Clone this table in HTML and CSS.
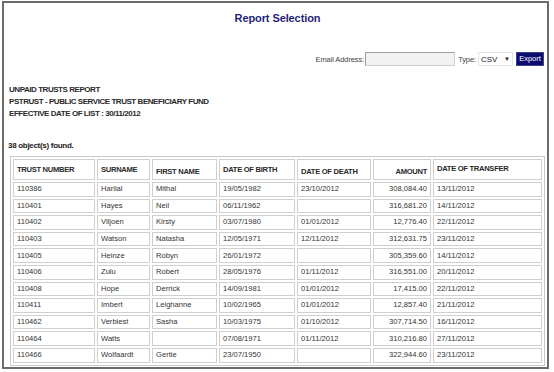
FILE: index.html
```html
<!DOCTYPE html>
<html>
<head>
<meta charset="utf-8">
<link rel="stylesheet" href="styles.css">
</head>
<body>
<div class="frame">
  <h1 class="title">Report Selection</h1>
  <div class="export-row">
    <span class="lbl">Email Address:</span>
    <span class="email"></span>
    <span class="lbl type-lbl">Type:</span>
    <span class="select">CSV <span class="arrow">▼</span></span>
    <span class="btn">Export</span>
  </div>
  <div class="report-head">
    <div>UNPAID TRUSTS REPORT</div>
    <div>PSTRUST - PUBLIC SERVICE TRUST BENEFICIARY FUND</div>
    <div>EFFECTIVE DATE OF LIST : 30/11/2012</div>
  </div>
  <div class="found">38 object(s) found.</div>
  <table class="grid">
    <colgroup>
      <col style="width:82px"><col style="width:53px"><col style="width:65px"><col style="width:76px"><col style="width:74px"><col style="width:58px"><col style="width:109px">
    </colgroup>
    <thead>
      <tr>
        <th>TRUST NUMBER</th>
        <th>SURNAME</th>
        <th class="low">FIRST NAME</th>
        <th>DATE OF BIRTH</th>
        <th class="low">DATE OF DEATH</th>
        <th class="num low">AMOUNT</th>
        <th class="high">DATE OF TRANSFER</th>
      </tr>
    </thead>
    <tbody>
      <tr><td>110386</td><td>Harilal</td><td>Mithal</td><td>19/05/1982</td><td>23/10/2012</td><td class="num">308,084.40</td><td>13/11/2012</td></tr>
      <tr><td>110401</td><td>Hayes</td><td>Neil</td><td>06/11/1962</td><td></td><td class="num">316,681.20</td><td>14/11/2012</td></tr>
      <tr><td>110402</td><td>Viljoen</td><td>Kirsty</td><td>03/07/1980</td><td>01/01/2012</td><td class="num">12,776.40</td><td>22/11/2012</td></tr>
      <tr><td>110403</td><td>Watson</td><td>Natasha</td><td>12/05/1971</td><td>12/11/2012</td><td class="num">312,631.75</td><td>23/11/2012</td></tr>
      <tr><td>110405</td><td>Heinze</td><td>Robyn</td><td>26/01/1972</td><td></td><td class="num">305,359.60</td><td>14/11/2012</td></tr>
      <tr><td>110406</td><td>Zulu</td><td>Robert</td><td>28/05/1976</td><td>01/11/2012</td><td class="num">316,551.00</td><td>20/11/2012</td></tr>
      <tr><td>110408</td><td>Hope</td><td>Derrick</td><td>14/09/1981</td><td>01/01/2012</td><td class="num">17,415.00</td><td>22/11/2012</td></tr>
      <tr><td>110411</td><td>Imbert</td><td>Leighanne</td><td>10/02/1965</td><td>01/01/2012</td><td class="num">12,857.40</td><td>21/11/2012</td></tr>
      <tr><td>110462</td><td>Verbiest</td><td>Sasha</td><td>10/03/1975</td><td>01/10/2012</td><td class="num">307,714.50</td><td>16/11/2012</td></tr>
      <tr><td>110464</td><td>Watts</td><td></td><td>07/08/1971</td><td>01/11/2012</td><td class="num">310,216.80</td><td>27/11/2012</td></tr>
      <tr><td>110466</td><td>Wolfaardt</td><td>Gertie</td><td>23/07/1950</td><td></td><td class="num">322,944.60</td><td>23/11/2012</td></tr>
    </tbody>
  </table>
</div>
</body>
</html>
```

FILE: styles.css
```css
html, body {
  margin: 0;
  padding: 0;
  background: #ffffff;
}

body {
  font-family: "Liberation Sans", Arial, sans-serif;
  color: #333333;
}

.frame {
  box-sizing: border-box;
  width: 547px;
  height: 368px;
  margin: 1px 0 0 2px;
  border: 2px solid #6b6b6b;
  padding: 0 0 0 4px;
  background: #ffffff;
}

.title {
  margin: 0;
  padding-top: 9px;
  height: 20px;
  text-align: center;
  font-size: 11px;
  font-weight: bold;
  color: #1f1f7a;
  letter-spacing: -0.1px;
}

.export-row {
  display: flex;
  justify-content: flex-end;
  align-items: center;
  margin-top: 20px;
  padding-right: 3px;
  height: 14px;
  font-size: 7.5px;
  color: #444;
}

.lbl {
  letter-spacing: -0.1px;
}

.email {
  width: 88px;
  height: 12px;
  border: 1px solid #a0a0a0;
  border-right-color: #d0d0d0;
  border-bottom-color: #d0d0d0;
  background: #f2f2f2;
  margin-left: 1px;
}

.type-lbl {
  margin-left: 3px;
}

.select {
  display: flex;
  align-items: center;
  justify-content: space-between;
  box-sizing: border-box;
  width: 35px;
  height: 14px;
  margin-left: 2px;
  padding: 0 2px 0 2px;
  border: 1px solid #e4e4e4;
  font-size: 8px;
  color: #222;
}

.arrow {
  font-size: 6px;
}

.btn {
  box-sizing: border-box;
  height: 14px;
  width: 28px;
  margin-left: 3px;
  background: #0c0c6e;
  border: 1px solid #404090;
  color: #ffffff;
  font-size: 7.5px;
  line-height: 12px;
  text-align: center;
}

.report-head {
  margin-top: 18px;
  padding-left: 1px;
  font-size: 8px;
  font-weight: bold;
  line-height: 12px;
  letter-spacing: -0.45px;
  color: #2a2a2a;
}

.found {
  margin-top: 20px;
  padding-left: 0;
  font-size: 8px;
  font-weight: bold;
  line-height: 12px;
  letter-spacing: -0.3px;
  color: #1a1a1a;
}

.grid {
  margin-top: 4px;
  margin-left: 2px;
  border: 1px solid #c8c8c8;
  border-spacing: 2px;
  border-collapse: separate;
  table-layout: fixed;
  font-size: 7.6px;
  color: #333;
}

.grid th,
.grid td {
  box-sizing: border-box;
  border: 1px solid #cfcfcf;
  padding: 0 2px 0 3px;
  text-align: left;
  white-space: nowrap;
  overflow: hidden;
}

.grid th {
  height: 21px;
  font-weight: bold;
  color: #2a2a2a;
  letter-spacing: -0.3px;
  vertical-align: middle;
  padding-top: 0;
}

.grid th.low {
  padding-top: 3px;
}

.grid th.high {
  vertical-align: top;
  padding-top: 4px;
}

.grid td {
  height: 14.6px;
  line-height: 10px;
}

.grid .num {
  text-align: right;
  padding-right: 3px;
}
```
